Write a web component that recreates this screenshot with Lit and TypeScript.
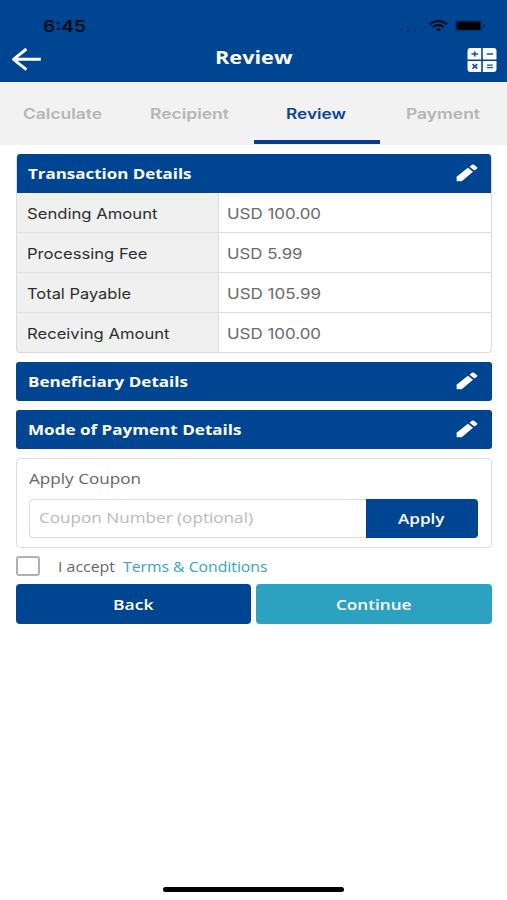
import { LitElement, html, css, svg } from "lit";
import { customElement, property } from "lit/decorators.js";

/** Text set to a fixed width, with glyphs widened to fill it. */
@customElement("wide-text")
class WideText extends LitElement {
  @property() text = "";
  @property({ type: Number }) width = 100;
  @property({ type: Number }) base = 15;

  static styles = css`
    :host { display: block; flex: none; height: 20px; }
    svg { display: block; overflow: visible; }
    text { fill: currentColor; }
  `;

  render() {
    return html`<svg width=${this.width} height="20">
      ${svg`<text x="0" y=${this.base} textLength=${this.width} lengthAdjust="spacingAndGlyphs">${this.text}</text>`}
    </svg>`;
  }
}

const pencil = html`<svg class="pencil" width="22" height="18" viewBox="0 0 22 18">
  <path fill="#fff" d="M0.6 12.8 L11.9 3.8 L17 7.8 L5.7 17.3 H1.6 Q0.6 17.3 0.6 16.4 Z"/>
  <path fill="#fff" d="M13.5 2.7 L15.9 0.8 Q17 0.1 18 0.8 L21 3.2 Q21.8 3.9 21 4.6 L18.6 6.6 Z"/>
</svg>`;

@customElement("app-root")
class AppRoot extends LitElement {
  static styles = css`
    :host {
      display: block;
      width: 507px;
      height: 900px;
      overflow: hidden;
      background: #fff;
      font-family: "Open Sans", sans-serif;
      font-size: 14.5px;
      color: #666;
    }
    * { box-sizing: border-box; }
    svg { display: block; flex: none; }
    .screen { display: flex; flex-direction: column; height: 900px; }
    .top { background: #004592; height: 81.5px; color: #fff; }
    .status {
      display: flex;
      align-items: flex-start;
      justify-content: space-between;
      height: 37px;
      padding: 16px 22px 0 42.5px;
      color: #020a18;
      font: 600 15.5px Inter, sans-serif;
    }
    .nav {
      display: grid;
      grid-template-columns: 1fr auto 1fr;
      align-items: center;
      height: 44px;
      padding: 0 11px 0 11px;
      font-size: 18px;
      font-weight: 700;
    }
    .nav .calc { justify-self: end; position: relative; top: 1px; left: 1px; }
    .tabs {
      display: grid;
      grid-template-columns: repeat(4, 1fr);
      height: 63.5px;
      background: #f2f2f2;
      color: #b5b5b5;
      font: 600 14.4px Inter, sans-serif;
    }
    .tab {
      display: flex;
      justify-content: center;
      padding: 22px 1.5px 0 0;
      border-bottom: 4.5px solid transparent;
      height: 62.5px;
    }
    .tab.on { color: #0b4494; border-color: #063f8f; }
    .body { padding: 8.5px 15.5px 0 16px; display: flex; flex-direction: column; }
    .bar {
      display: flex;
      align-items: center;
      justify-content: space-between;
      height: 39px;
      padding: 0 14px 0 12px;
      background: #004592;
      color: #fff;
      font-weight: 700;
      font-size: 14.4px;
      border-radius: 3px;
    }
    .bar .pencil { margin-top: -1px; }
    .details {
      border: 1px solid #dcdcdc;
      border-top: 0;
      border-radius: 4px;
      height: 199.5px;
      overflow: hidden;
      margin-bottom: 9px;
    }
    .details .bar { border-radius: 0; height: 39.5px; padding: 0 13px 0 11px; }
    .row { display: grid; grid-template-columns: 202px 1fr; height: 40px; border-bottom: 1px solid #dedede; }
    .row:last-child { border-bottom: 0; }
    .row div { display: flex; align-items: center; font-family: Inter, sans-serif; font-size: 14.6px; }
    .row .key { background: #f0f0f0; color: #2e2e2e; padding-left: 9.7px; border-right: 1px solid #dcdcdc; }
    .row .val { color: #6a6a6a; padding-left: 8px; }
    .gap { margin-bottom: 9px; }
    .coupon {
      height: 90px;
      border: 1px solid #dedede;
      border-radius: 4px;
      padding: 10px 13px 0 12px;
    }
    .field { display: flex; margin-top: 9.5px; height: 39px; }
    .input {
      flex: 1;
      display: flex;
      align-items: center;
      padding-left: 9px;
      border: 1px solid #dcdcdc;
      border-right: 0;
      border-radius: 4px 0 0 4px;
      color: #b9b9b9;
    }
    .apply { width: 112px; border-radius: 0 4px 4px 0; }
    .btn {
      display: flex;
      align-items: center;
      justify-content: center;
      background: #004592;
      color: #fff;
      font-weight: 600;
    }
    .accept { display: flex; align-items: center; height: 20px; margin-top: 8px; font-size: 13.7px; }
    .box { width: 24px; height: 20px; border: 2px solid #b0b0b0; border-radius: 3px; margin-right: 18px; }
    .link { color: #36a5c4; margin-left: 8px; }
    .actions { display: grid; grid-template-columns: 1fr 1fr; gap: 5px; margin: 8px -0.5px 0 -0.5px; }
    .actions .btn { height: 40px; border-radius: 4px; }
    .actions .go { background: #2ca1c0; }
    .home { width: 181px; height: 5px; border-radius: 3px; background: #000; margin: auto auto 8px; }
  `;

  private rows: [string, number, string, number][] = [
    ["Sending Amount", 130.5, "USD 100.00", 94],
    ["Processing Fee", 120.5, "USD 5.99", 75.5],
    ["Total Payable", 104, "USD 105.99", 94],
    ["Receiving Amount", 142.5, "USD 100.00", 94],
  ];

  private tabs: [string, number][] = [
    ["Calculate", 79],
    ["Recipient", 79],
    ["Review", 60],
    ["Payment", 74],
  ];

  private t(text: string, width: number, base = 15, cls = "") {
    return html`<wide-text class=${cls} .text=${text} .width=${width} .base=${base}></wide-text>`;
  }

  render() {
    return html`<div class="screen">
      <div class="top">
        <div class="status">
          ${this.t("6:45", 43, 16)}
          <svg width="85" height="20" viewBox="400 16 85 20">
            <g fill="#03306c">
              <circle cx="402" cy="30" r="1.2"/><circle cx="408.5" cy="30" r="1.2"/>
              <circle cx="415" cy="30" r="1.2"/><circle cx="421.5" cy="30" r="1.2"/>
            </g>
            <g fill="none" stroke="#020a18" stroke-width="2.2">
              <path d="M429.5 24.3 Q438.2 17.4 446.9 24.3"/>
              <path d="M432.9 27.2 Q438.2 23 443.5 27.2"/>
            </g>
            <path fill="#020a18" d="M435.6 29.2 Q438.2 27.2 440.8 29.2 L438.2 31.6 Z"/>
            <rect x="454.6" y="20" width="27.8" height="11.4" rx="2.6" fill="#00397c"/>
            <rect x="456.6" y="21.6" width="23.8" height="8.4" rx="1" fill="#000209"/>
            <path d="M483.6 23.8 q1.4 2 0 4 z" fill="#03306c" stroke="#03306c" stroke-width=".8"/>
          </svg>
        </div>
        <div class="nav">
          <svg width="30" height="24" viewBox="0 0 30 24" fill="none" stroke="#fff" stroke-width="2.9">
            <path d="M2.5 12.3 H29.8 M15.4 2 L2.5 12.3 L15.4 22.6" stroke-linejoin="round"/>
          </svg>
          ${this.t("Review", 77.5, 15.3)}
          <svg class="calc" width="30" height="24" viewBox="0 0 30 24">
            <g fill="#fff">
              <path d="M3.5 0 H14.2 V11.6 H.5 V3 Q.5 0 3.5 0Z"/>
              <path d="M15.8 0 H26.5 Q29.5 0 29.5 3 V11.6 H15.8Z"/>
              <path d="M.5 12.9 H14.2 V24 H3.5 Q.5 24 .5 21Z"/>
              <path d="M15.8 12.9 H29.5 V21 Q29.5 24 26.5 24 H15.8Z"/>
            </g>
            <g stroke="#174f98" stroke-width="1.7" fill="none">
              <path d="M4.5 6 H11 M7.7 3.4 V8.6 M19.8 6 H26"/>
              <path d="M5.5 16.2 L10.2 20.6 M10.2 16.2 L5.5 20.6"/>
              <path d="M20 17.1 H25.8 M20 19.7 H25.8" stroke-width="1.3"/>
            </g>
          </svg>
        </div>
      </div>
      <div class="tabs">
        ${this.tabs.map(([n, w]) => html`<div class="tab ${n === "Review" ? "on" : ""}">${this.t(n, w, 14.8)}</div>`)}
      </div>
      <div class="body">
        <div class="details">
          <div class="bar">${this.t("Transaction Details", 163.5, 15.8)}${pencil}</div>
          ${this.rows.map(
            ([k, kw, v, vw]) => html`<div class="row">
              <div class="key">${this.t(k, kw, 16)}</div>
              <div class="val">${this.t(v, vw, 16)}</div>
            </div>`
          )}
        </div>
        <div class="bar gap">${this.t("Beneficiary Details", 160, 15.3)}${pencil}</div>
        <div class="bar gap">${this.t("Mode of Payment Details", 213.5, 15.3)}${pencil}</div>
        <div class="coupon">
          ${this.t("Apply Coupon", 112, 15)}
          <div class="field">
            <div class="input">${this.t("Coupon Number (optional)", 214, 15.4)}</div>
            <div class="btn apply">${this.t("Apply", 46.5, 15.6)}</div>
          </div>
        </div>
        <div class="accept">
          <div class="box"></div>
          ${this.t("I accept", 57, 15.6)}
          ${this.t("Terms & Conditions", 144.5, 15.6, "link")}
        </div>
        <div class="actions">
          <div class="btn">${this.t("Back", 40.5, 15.5)}</div>
          <div class="btn go">${this.t("Continue", 75.5, 15.5)}</div>
        </div>
      </div>
      <div class="home"></div>
    </div>`;
  }
}
